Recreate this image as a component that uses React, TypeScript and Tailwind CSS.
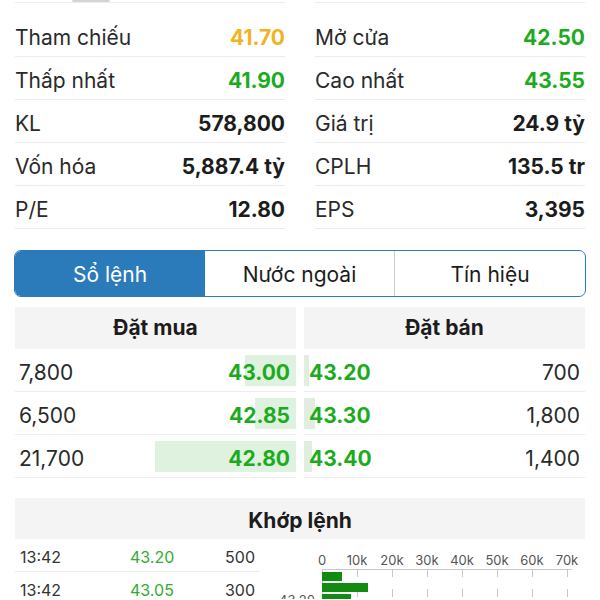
import React from "react";

const stats: [string, string, string, string, string, string][] = [
  ["Tham chiếu", "41.70", "text-[#f0b323]", "Mở cửa", "42.50", "text-[#1cab1c]"],
  ["Thấp nhất", "41.90", "text-[#1cab1c]", "Cao nhất", "43.55", "text-[#1cab1c]"],
  ["KL", "578,800", "text-[#1c1c1c]", "Giá trị", "24.9 tỷ", "text-[#1c1c1c]"],
  ["Vốn hóa", "5,887.4 tỷ", "text-[#1c1c1c]", "CPLH", "135.5 tr", "text-[#1c1c1c]"],
  ["P/E", "12.80", "text-[#1c1c1c]", "EPS", "3,395", "text-[#1c1c1c]"],
];

const buys = [
  { q: "7,800", p: "43.00", w: 51 },
  { q: "6,500", p: "42.85", w: 41 },
  { q: "21,700", p: "42.80", w: 141 },
];
const sells = [
  { q: "700", p: "43.20", w: 5 },
  { q: "1,800", p: "43.30", w: 11 },
  { q: "1,400", p: "43.40", w: 8 },
];

function StatRow({ label, value, cls }: { label: string; value: string; cls: string }) {
  return (
    <div className="flex h-[43px] items-center justify-between border-b border-[#ececec] pt-[6px]">
      <span className="text-[21px] text-[#2a2a2a]">{label}</span>
      <span className={`text-[21px] font-bold ${cls}`}>{value}</span>
    </div>
  );
}

export default function App() {
  const ticks = [0, 10, 20, 30, 40, 50, 60, 70];
  return (
    <div className="w-[600px] bg-white font-['Inter','Liberation_Sans',sans-serif] text-[#1c1c1c] overflow-hidden h-[600px]">
      {/* cut-off top */}
      <div className="flex gap-[30px] px-[15px]">
        <div className="flex-1 h-[3px] border-b border-[#ececec]">
          <div className="ml-[57px] w-[38px] h-[2px] rounded-b bg-[#d4d4d4]" />
        </div>
        <div className="flex-1 h-[3px] border-b border-[#ececec]" />
      </div>

      {/* stats */}
      <div className="mt-[11px] grid grid-cols-2 gap-x-[30px] px-[15px]">
        <div className="flex flex-col">
          {stats.map((s) => (
            <StatRow key={s[0]} label={s[0]} value={s[1]} cls={s[2]} />
          ))}
        </div>
        <div className="flex flex-col">
          {stats.map((s) => (
            <StatRow key={s[3]} label={s[3]} value={s[4]} cls={s[5]} />
          ))}
        </div>
      </div>

      {/* tabs */}
      <div className="mx-[14px] mt-[21px] grid h-[47px] grid-cols-3 overflow-hidden rounded-[7px] border border-[#2b7bba]">
        <div className="flex items-center justify-center bg-[#2b7bba] pt-[2px] text-[21px] text-white">Sổ lệnh</div>
        <div className="flex items-center justify-center border-r border-[#c3cfd9] pt-[2px] text-[21px] text-[#1c1c1c]">Nước ngoài</div>
        <div className="flex items-center justify-center pt-[2px] text-[21px] text-[#1c1c1c]">Tín hiệu</div>
      </div>

      {/* order book */}
      <div className="mt-[10px] grid grid-cols-2 gap-x-[8px] px-[15px]">
        <div className="flex flex-col">
          <div className="flex h-[42px] items-center justify-center bg-[#f4f4f4] text-[21px] font-bold">Đặt mua</div>
          {buys.map((b) => (
            <div key={b.p} className="relative flex h-[43px] items-center justify-between border-b border-[#ececec] pl-[4px] pr-[6px] pt-[6px]">
              <div className="absolute right-0 top-[6px] bottom-[5px] bg-[#dff2df]" style={{ width: b.w }} />
              <span className="relative text-[21px] text-[#2a2a2a]">{b.q}</span>
              <span className="relative text-[21px] font-bold text-[#1cab1c]">{b.p}</span>
            </div>
          ))}
        </div>
        <div className="flex flex-col">
          <div className="flex h-[42px] items-center justify-center bg-[#f4f4f4] text-[21px] font-bold">Đặt bán</div>
          {sells.map((s) => (
            <div key={s.p} className="relative flex h-[43px] items-center justify-between border-b border-[#ececec] pl-[5px] pr-[5px] pt-[6px]">
              <div className="absolute left-0 top-[6px] bottom-[5px] bg-[#e0eee0]" style={{ width: s.w }} />
              <span className="relative text-[21px] font-bold text-[#1cab1c]">{s.p}</span>
              <span className="relative text-[21px] text-[#2a2a2a]">{s.q}</span>
            </div>
          ))}
        </div>
      </div>

      {/* khop lenh */}
      <div className="mx-[15px] mt-[20px] flex h-[41px] items-center justify-center bg-[#f4f4f4] pt-[4px] text-[21px] font-bold">Khớp lệnh</div>
      <div className="flex pl-[15px]">
        <div className="flex w-[245px] flex-col">
          {[
            ["13:42", "43.20", "500"],
            ["13:42", "43.05", "300"],
          ].map((r, i) => (
            <div key={i} className="flex h-[33px] items-center border-b border-[#ececec] pt-[4px] text-[16px]">
              <span className="w-[115px] pl-[5px] text-[#333]">{r[0]}</span>
              <span className="w-[80px] text-[#2fae2f]">{r[1]}</span>
              <span className="flex-1 pr-[5px] text-right text-[#333]">{r[2]}</span>
            </div>
          ))}
        </div>
        <svg width="310" height="60" className="ml-[15px] shrink-0" viewBox="0 0 310 60">
          {ticks.map((t, i) => (
            <text key={t} x={47 + i * 35} y={26} textAnchor="middle" fontSize="13" fill="#555" fontFamily="Inter, sans-serif">
              {t === 0 ? "0" : `${t}k`}
            </text>
          ))}
          <line x1="47" y1="30.5" x2="297" y2="30.5" stroke="#c8c8c8" strokeWidth="1" />
          {ticks.slice(1).map((t, i) => (
            <line key={t} x1={82 + i * 35 + 0.5} y1="30" x2={82 + i * 35 + 0.5} y2="60" stroke="#c8c8c8" strokeWidth="1" strokeDasharray="8 12" />
          ))}
          <line x1="47.5" y1="30" x2="47.5" y2="60" stroke="#c8c8c8" strokeWidth="1" />
          <rect x="47" y="33" width="20" height="9" fill="#118c11" />
          <rect x="47" y="44" width="46" height="9" fill="#118c11" />
          <rect x="47" y="55" width="29" height="9" fill="#118c11" />
          <text x="40" y="66" textAnchor="end" fontSize="13" fill="#555" fontFamily="Inter, sans-serif">43.20</text>
        </svg>
      </div>
    </div>
  );
}
